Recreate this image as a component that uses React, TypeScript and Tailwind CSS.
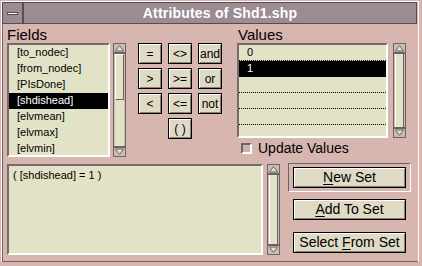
import React from "react";

const fields = ["[to_nodec]", "[from_nodec]", "[PIsDone]", "[shdishead]", "[elvmean]", "[elvmax]", "[elvmin]"];
const values = ["0", "1", "", "", "", ""];
const ops = ["=", "<>", "and", ">", ">=", "or", "<", "<=", "not"];

const Arrow = ({ down }: { down?: boolean }) => (
  <svg width="11" height="9" viewBox="0 0 11 9" className="shrink-0">
    {down ? (
      <>
        <rect x="0" y="0" width="11" height="2" fill="#6e6266" />
        <polygon points="1.5,3 9.5,3 5.5,8.5" fill="#e2e2c6" stroke="#6e6266" strokeWidth="1" />
      </>
    ) : (
      <>
        <polygon points="5.5,0.5 9.5,6 1.5,6" fill="#e2e2c6" stroke="#6e6266" strokeWidth="1" />
        <rect x="0" y="7" width="11" height="2" fill="#6e6266" />
      </>
    )}
  </svg>
);

const ScrollBar = ({ h, thumb }: { h: string; thumb?: string }) => (
  <div className={`flex flex-col items-center ${h} w-[13px] border border-[#6e6266] bg-[#c9bdb0] py-[1px]`}>
    <Arrow />
    <div className="flex w-full flex-1 flex-col px-[1px]">
      {thumb ? (
        <>
          <div className={`${thumb} w-full border-l border-t border-white border-r border-b border-r-[#6e6266] border-b-[#6e6266] bg-[#e2e2c6]`} />
          <div className="flex-1 bg-[#e2e2c6]" />
        </>
      ) : (
        <div className="w-full flex-1 border-l border-white border-r border-r-[#6e6266] bg-[#e2e2c6]" />
      )}
    </div>
    <Arrow down />
  </div>
);

const ListBox = ({ items, sel, w, h, dots }: { items: string[]; sel: number; w: string; h: string; dots?: boolean }) => (
  <div className={`${w} ${h} overflow-hidden border-2 border-t-[#7a6a6a] border-l-[#7a6a6a] border-b-white border-r-white bg-[#e2e2c6]`}>
    {items.map((it, i) => (
      <div
        key={i}
        className={`flex h-[16px] items-center border-b border-dotted pl-[8px] text-[11px] ${dots ? "border-black" : "border-transparent"} ${i === sel ? "bg-black text-white" : "text-black"}`}
      >
        {it}
      </div>
    ))}
  </div>
);

const Button = ({ children, w }: { children: React.ReactNode; w: string }) => (
  <div className={`${w} flex h-[21px] items-center justify-center border border-black bg-[#dedac4] text-[14px] text-black shadow-[inset_1px_1px_0_#ffffff,inset_-1px_-1px_0_#8a8070]`}>
    {children}
  </div>
);

export default function App() {
  return (
    <div className="flex h-[266px] w-[422px] flex-col bg-[#d6b6ae] pb-[4px] pl-[1px] pr-[3px] pt-[1px] font-['Liberation_Sans',Arial,sans-serif]">
      <div className="flex flex-1 flex-col border-l border-r border-t border-white">
        <div className="mr-[1px] flex h-[22px]">
          <div className="flex w-[21px] items-center justify-center border border-[#5a4a52] bg-[#9b8b93]">
            <div className="h-[3px] w-[11px] border border-[#5a4a52] bg-white" />
          </div>
          <div className="flex flex-1 items-center justify-center border border-[#5a4a52] bg-[#9b8b93] text-[14px] font-bold tracking-[0.2px] text-white">
            Attributes of Shd1.shp
          </div>
        </div>
        <div className="flex flex-1 flex-col border-b border-l border-[#6e6266] pl-[4px] pt-[2px]">
          <div className="flex items-start">
            <div className="flex flex-col">
              <div className="h-[17px] text-[15px] leading-[17px] text-black">Fields</div>
              <div className="flex">
                <ListBox items={fields} sel={3} w="w-[103px]" h="h-[114px]" />
                <div className="ml-[3px]">
                  <ScrollBar h="h-[114px]" thumb="h-[46px]" />
                </div>
              </div>
            </div>
            <div className="ml-[12px] mt-[17px] grid grid-cols-[24px_24px_24px] gap-x-[6px] gap-y-[4px]">
              {ops.map((o) => (
                <Button key={o} w="w-[24px]">
                  <span className="text-[12px]">{o}</span>
                </Button>
              ))}
              <div />
              <Button w="w-[24px]">
                <span className="text-[12px]">( )</span>
              </Button>
            </div>
            <div className="ml-[15px] flex flex-col">
              <div className="h-[17px] pl-[1px] text-[15px] leading-[17px] text-black">Values</div>
              <div className="flex">
                <ListBox items={values} sel={1} w="w-[151px]" h="h-[95px]" dots />
                <div className="ml-[5px]">
                  <ScrollBar h="h-[95px]" />
                </div>
              </div>
              <div className="mt-[3px] flex items-center pl-[4px]">
                <div className="h-[11px] w-[11px] border-2 border-t-[#6e6266] border-l-[#6e6266] border-b-white border-r-white bg-[#c9b3ab]" />
                <span className="ml-[6px] text-[14px] leading-[14px] text-black">Update Values</span>
              </div>
            </div>
          </div>
          <div className="mt-[6px] flex items-start">
            <div className="mt-[1px] h-[91px] w-[256px] border-2 border-t-[#7a6a6a] border-l-[#7a6a6a] border-b-white border-r-white bg-[#e2e2c6] pl-[4px] pt-[2px] text-[11px] leading-[14px] text-black">
              ( [shdishead] = 1 )
            </div>
            <div className="ml-[4px] mt-[1px]">
              <ScrollBar h="h-[91px]" />
            </div>
            <div className="ml-[8px] flex flex-col">
              <div className="border border-l-[#6e6266] border-t-[#6e6266] border-b-white border-r-white px-[4px] py-[3px]">
                <Button w="w-[113px]">
                  <span>
                    <u className="underline-offset-2">N</u>ew Set
                  </span>
                </Button>
              </div>
              <div className="ml-[5px] mt-[7px]">
                <Button w="w-[113px]">
                  <span>
                    <u className="underline-offset-2">A</u>dd To Set
                  </span>
                </Button>
              </div>
              <div className="ml-[5px] mt-[12px]">
                <Button w="w-[113px]">
                  <span>
                    Select <u className="underline-offset-2">F</u>rom Set
                  </span>
                </Button>
              </div>
            </div>
          </div>
        </div>
      </div>
    </div>
  );
}
